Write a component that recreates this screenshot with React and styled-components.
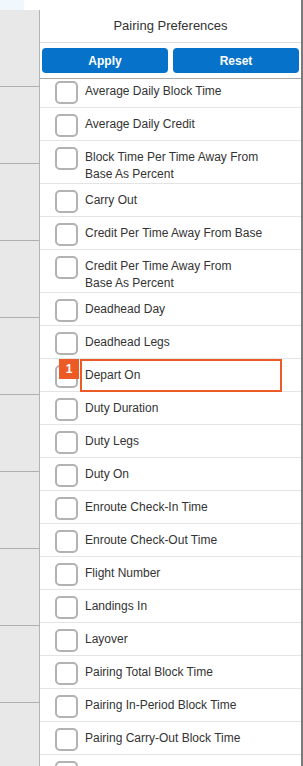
import React from "react";
import styled, { createGlobalStyle } from "styled-components";

const Global = createGlobalStyle`
  html, body { margin: 0; padding: 0; height: 766px; overflow: hidden; background: #fff; }
  body { font-family: "Liberation Sans", Arial, sans-serif; }
  #root { height: 766px; }
`;

const Page = styled.div`
  display: flex;
  height: 766px;
  overflow: hidden;
  background: #fff;
`;

const Rail = styled.div`
  width: 40px;
  flex: none;
  display: flex;
  flex-direction: column;
`;

const RailTop = styled.div`
  height: 10px;
  flex: none;
  display: flex;
`;

const RailTint = styled.div`
  width: 24px;
  background: #f0f7fd;
`;

const RailBody = styled.div`
  flex: 1;
  background: #e8e8e8;
  border-right: 1px solid #b4b4b4;
  padding-top: 76px;
`;

const RailCell = styled.div`
  height: 77px;
  box-sizing: border-box;
  border-top: 1px solid #b0b0b0;
`;

const Panel = styled.div`
  flex: 1;
  display: flex;
  flex-direction: column;
  min-width: 0;
  overflow: hidden;
`;

const Edge = styled.div`
  width: 2px;
  flex: none;
  background: #7a7a7a;
`;

const Title = styled.div`
  height: 43px;
  box-sizing: border-box;
  padding-top: 8px;
  flex: none;
  display: flex;
  align-items: center;
  justify-content: center;
  border-bottom: 1px solid #dcdcdc;
  font-size: 13px;
  color: #333;
`;

const ButtonBar = styled.div`
  flex: none;
  display: grid;
  grid-template-columns: 1fr 1fr;
  gap: 5px;
  padding: 5px 2px;
  border-bottom: 1px solid #a8a8a8;
  position: relative;
  z-index: 1;
  background: #fff;
`;

const Button = styled.button`
  height: 25px;
  border: none;
  border-radius: 4px;
  background: #0672c9;
  color: #fff;
  font-family: "Liberation Sans", Arial, sans-serif;
  font-size: 12px;
  font-weight: bold;
  padding: 0;
  cursor: pointer;
`;

const Viewport = styled.div`
  flex: 1;
  overflow: hidden;
`;

const List = styled.div`
  display: flex;
  flex-direction: column;
  margin-top: -4px;
`;

const Row = styled.div`
  position: relative;
  display: flex;
  align-items: flex-start;
  gap: 7px;
  min-height: 33px;
  box-sizing: border-box;
  padding-left: 15px;
  border-bottom: 1px solid #e4e4e4;
`;

const Check = styled.span`
  flex: none;
  margin-top: 6px;
  width: 23px;
  height: 23px;
  box-sizing: border-box;
  border: 2px solid #b2b2b2;
  border-radius: 5px;
  background: #fff;
`;

const Label = styled.span`
  font-size: 12px;
  line-height: 17px;
  color: #333;
  padding-top: 8px;
`;

const Highlight = styled.div`
  position: absolute;
  left: 40px;
  right: 19px;
  top: 0;
  height: 33px;
  box-sizing: border-box;
  border: 2px solid #ec5a26;
  pointer-events: none;
`;

const Badge = styled.div`
  position: absolute;
  left: 19px;
  top: 0;
  width: 20px;
  height: 20px;
  background: #ec5a26;
  color: #fff;
  font-size: 12px;
  font-weight: bold;
  display: flex;
  align-items: center;
  justify-content: center;
`;

const items = [
  ["Average Daily Block Time"],
  ["Average Daily Credit"],
  ["Block Time Per Time Away From", "Base As Percent"],
  ["Carry Out"],
  ["Credit Per Time Away From Base"],
  ["Credit Per Time Away From", "Base As Percent"],
  ["Deadhead Day"],
  ["Deadhead Legs"],
  ["Depart On"],
  ["Duty Duration"],
  ["Duty Legs"],
  ["Duty On"],
  ["Enroute Check-In Time"],
  ["Enroute Check-Out Time"],
  ["Flight Number"],
  ["Landings In"],
  ["Layover"],
  ["Pairing Total Block Time"],
  ["Pairing In-Period Block Time"],
  ["Pairing Carry-Out Block Time"],
  [""],
];

export default function App() {
  return (
    <>
      <Global />
      <Page>
        <Rail>
          <RailTop>
            <RailTint />
          </RailTop>
          <RailBody>
            {Array.from({ length: 9 }).map((_, i) => (
              <RailCell key={i} />
            ))}
          </RailBody>
        </Rail>
        <Panel>
          <Title>Pairing Preferences</Title>
          <ButtonBar>
            <Button>Apply</Button>
            <Button>Reset</Button>
          </ButtonBar>
          <Viewport>
            <List>
              {items.map((lines, i) => (
                <Row key={i}>
                  <Check />
                  <Label>
                    {lines.map((l, j) => (
                      <React.Fragment key={j}>
                        {j > 0 && <br />}
                        {l}
                      </React.Fragment>
                    ))}
                  </Label>
                  {lines[0] === "Depart On" && (
                    <>
                      <Highlight />
                      <Badge>1</Badge>
                    </>
                  )}
                </Row>
              ))}
            </List>
          </Viewport>
        </Panel>
        <Edge />
      </Page>
    </>
  );
}
